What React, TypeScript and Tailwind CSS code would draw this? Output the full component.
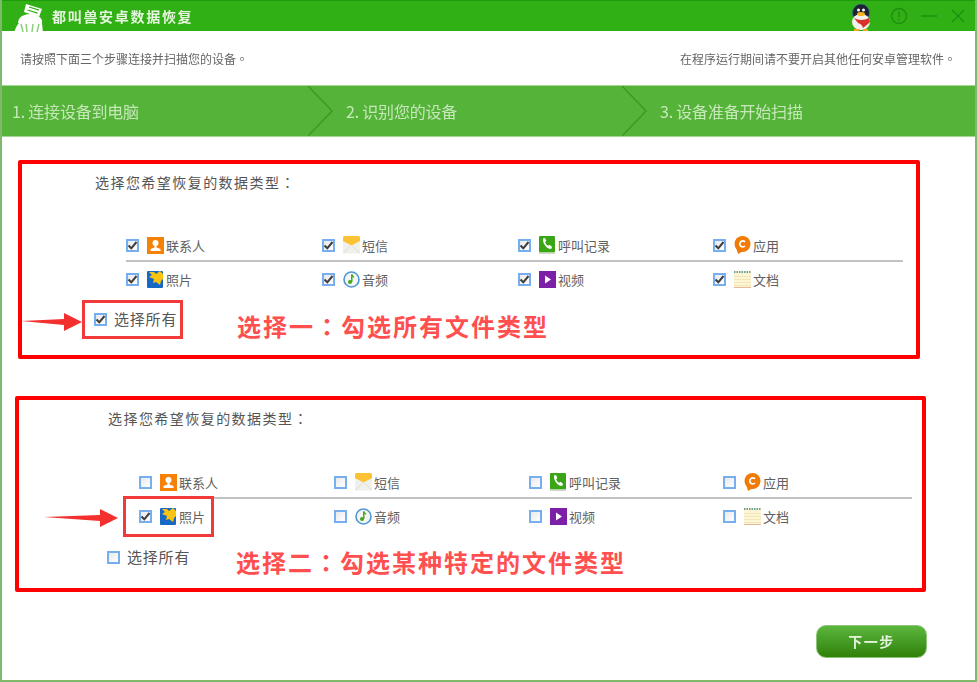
const cjk = { fontFamily: '"Noto Sans CJK SC", "Liberation Sans", sans-serif' };

function Check({ on }: { on?: boolean }) {
  return (
    <span className="flex h-[13px] w-[13px] shrink-0 items-center justify-center border-2 border-[#77aef0] bg-gradient-to-br from-[#e9e9e9] to-white">
      {on && (
        <svg width="11" height="11" viewBox="0 0 11 11" className="shrink-0">
          <path d="M1.5 5.5 L4.3 8.3 L9.5 2" fill="none" stroke="#3d3d3d" strokeWidth="2" />
        </svg>
      )}
    </span>
  );
}

function ContactIcon() {
  return (
    <svg width="17" height="17" viewBox="0 0 17 17">
      <rect width="17" height="17" fill="#f58207" />
      <circle cx="8.5" cy="6" r="3" fill="#fff" />
      <path d="M7.5 8.5h2v2l4 1.6V14H3.5v-1.9l4-1.6z" fill="#fff" />
    </svg>
  );
}

function SmsIcon() {
  return (
    <svg width="17" height="18" viewBox="0 0 17 18">
      <rect y="1" width="17" height="16.5" rx="1" fill="#f0f0ec" />
      <path d="M0 1.5Q0 0 1.5 0h14Q17 0 17 1.5V5l-8.5 4.5L0 5z" fill="#fbc333" />
      <path d="M0.5 17l7-7M16.5 17l-7-7" stroke="#dcdcd6" strokeWidth="1" />
    </svg>
  );
}

function CallIcon() {
  return (
    <svg width="16" height="18" viewBox="0 0 16 18">
      <rect width="16" height="16.5" rx="1" fill="#3aa616" />
      <rect y="16.5" width="16" height="1.5" fill="#cfd8c8" />
      <path d="M4 2.5l2-.5 1.4 3-1.3 1.2c.5 1.5 1.6 2.8 3 3.5l1.3-1 2.6 2-.8 2.3C8 13 3.5 8 4 2.5z" fill="#fff" />
    </svg>
  );
}

function AppIcon() {
  return (
    <svg width="18" height="18" viewBox="0 0 18 18">
      <circle cx="9.5" cy="8" r="8" fill="#f27a07" />
      <path d="M3 11l2 7 5-3z" fill="#f27a07" />
      <path d="M12 5.8A3 3 0 1 0 12 10" fill="none" stroke="#fff" strokeWidth="1.7" />
    </svg>
  );
}

function PhotoIcon() {
  return (
    <svg width="16" height="17" viewBox="0 0 16 17">
      <rect width="16" height="17" rx="1" fill="#1768c4" />
      <path d="M2 1h5l2 2 4-3 3 3v5l-2 2-1 4-4-3-3 1 1-4-5-2 3-2z" fill="#fbc312" />
    </svg>
  );
}

function AudioIcon() {
  return (
    <svg width="17" height="17" viewBox="0 0 17 17">
      <circle cx="8.5" cy="8.5" r="7.5" fill="#f3f6f2" stroke="#4e97d6" strokeWidth="1.6" />
      <path d="M8.8 3.5v7.2" stroke="#4aa51c" strokeWidth="1.5" />
      <circle cx="7" cy="11" r="2" fill="#4aa51c" />
      <path d="M8.8 3.5q.6 2 2.4 2.8" fill="none" stroke="#4aa51c" strokeWidth="1.2" />
    </svg>
  );
}

function VideoIcon() {
  return (
    <svg width="17" height="17" viewBox="0 0 17 17">
      <rect width="17" height="17" fill="#7d20a8" />
      <path d="M6 4.5l6 4-6 4z" fill="#fff" />
    </svg>
  );
}

function DocIcon() {
  return (
    <svg width="17" height="17" viewBox="0 0 17 17">
      <rect width="17" height="17" fill="#fdf5d6" />
      <path d="M0 5.5h17M0 8.5h17M0 11.5h17M0 14.5h17" stroke="#f2e6b8" strokeWidth="1" />
      <path d="M0 1h17" stroke="#6f9f96" strokeWidth="2" strokeDasharray="1.5 1" />
      <path d="M0 16.5h17" stroke="#e8b79a" strokeWidth="1" />
    </svg>
  );
}

function TypeItem({ on, icon, label }: { on?: boolean; icon: React.ReactNode; label: string }) {
  return (
    <div className="flex h-full items-center">
      <Check on={on} />
      <span className="ml-[7px] flex w-[18px] shrink-0 justify-center">{icon}</span>
      <span className="ml-[2px] text-[13px] leading-none text-[#606060]">{label}</span>
    </div>
  );
}

function Arrow({ w }: { w: number }) {
  return (
    <svg width={w} height="18" viewBox={`0 0 ${w} 18`}>
      <path d={`M0 8L${w - 18} 6V0L${w} 9L${w - 18} 18V12z`} fill="#f4302f" />
    </svg>
  );
}

function Chevron() {
  return (
    <svg width="26" height="50" viewBox="0 0 26 50" className="absolute top-0 -right-[20px] z-10">
      <path d="M0 0L24 25L0 50" fill="none" stroke="#3c9a24" strokeWidth="1.5" />
    </svg>
  );
}

export default function App() {
  return (
    <div className="flex h-[682px] w-[977px] flex-col overflow-hidden border-x-2 border-b-2 border-[#7fb96c] bg-white" style={cjk}>
      {/* Title bar */}
      <div className="relative z-20 flex h-[31px] shrink-0 items-center border-t border-[#1f9a0c] bg-[#31b015] pr-[10px] blur-[0.5px]">
        <svg width="30" height="29" viewBox="0 0 30 29" className="mt-[4px] ml-[12px] shrink-0">
          <path d="M12 0l16 5-3 8-15-5z" fill="#fff" />
          <path d="M15 3l10 3.2M13.5 6l10 3.2" stroke="#31b015" strokeWidth="1.3" />
          <path d="M8 12q8-4 16 0 5 3 4 7H4q0-4 4-7z" fill="#fff" />
          <path d="M0 29q2-7 5-10h23l1 10z" fill="#fff" />
          <path d="M12 20l1 8M19 20l-1 8M7 20l2 8M25 20l-2 8" stroke="#8ccf78" strokeWidth="1.5" />
        </svg>
        <span className="ml-[8px] text-[14px] font-bold tracking-[1.7px] text-[#e6f5df]">都叫兽安卓数据恢复</span>
        <svg width="24" height="27" viewBox="0 0 24 27" className="mt-[3px] ml-auto shrink-0">
          <ellipse cx="12" cy="9" rx="8.5" ry="9" fill="#1c2230" stroke="#2f6f8f" strokeWidth="0.8" />
          <ellipse cx="12" cy="18" rx="9" ry="8" fill="#f4f1ec" />
          <path d="M5 14q7 4 15 0l1 4q-3 3-7 6-1-4-5-5z" fill="#d8322a" />
          <ellipse cx="12" cy="10" rx="4" ry="2" fill="#f6b21b" />
          <circle cx="9.5" cy="6" r="1.5" fill="#fff" />
          <circle cx="14.5" cy="6" r="1.5" fill="#fff" />
          <path d="M5 26h5M14 26h5" stroke="#f6a51b" strokeWidth="2" />
        </svg>
        <svg width="18" height="18" viewBox="0 0 18 18" className="ml-[17px] shrink-0">
          <circle cx="9" cy="9" r="7.5" fill="none" stroke="#1f8f10" strokeWidth="1.5" />
          <path d="M9 4.5v6M9 12v1.5" stroke="#1f8f10" strokeWidth="1.5" />
        </svg>
        <svg width="16" height="2" viewBox="0 0 16 2" className="ml-[13px] shrink-0">
          <path d="M0 1h16" stroke="#1f8f10" strokeWidth="1.5" />
        </svg>
        <svg width="14" height="14" viewBox="0 0 14 14" className="ml-[14px] shrink-0">
          <path d="M1 1l12 12M13 1L1 13" stroke="#1f8f10" strokeWidth="1.4" />
        </svg>
      </div>

      {/* Hint row */}
      <div className="flex h-[54px] shrink-0 items-center justify-between pt-[1px] pr-[19px] pl-[18px] font-['Noto_Sans_CJK_TC'] text-[12px] text-[#666] blur-[0.5px]">
        <span>请按照下面三个步骤连接并扫描您的设备。</span>
        <span>在程序运行期间请不要开启其他任何安卓管理软件。</span>
      </div>

      {/* Steps */}
      <div className="flex h-[52px] shrink-0 border-y border-[#a5d695] bg-[#55b33a] text-[16px] tracking-[-0.2px] text-[#c6e8b9]">
        <div className="relative flex w-[312px] items-center pl-[10px]">
          <span className="blur-[0.5px]">1. 连接设备到电脑</span>
          <Chevron />
        </div>
        <div className="relative flex w-[314px] items-center pl-[32px]">
          <span className="blur-[0.5px]">2. 识别您的设备</span>
          <Chevron />
        </div>
        <div className="flex flex-1 items-center pl-[32px]">
          <span className="blur-[0.5px]">3. 设备准备开始扫描</span>
        </div>
      </div>

      {/* Option one */}
      <div className="relative mt-[23px] ml-[16px] h-[199px] w-[902px] shrink-0 rounded-[2px] border-4 border-[#ff0000]">
        <div className="mt-[8px] ml-[73px] h-[20px] font-['Noto_Sans_CJK_TC'] text-[14px] leading-[20px] tracking-[1.45px] text-[#555]">选择您希望恢复的数据类型：</div>
        <div className="mt-[38px] ml-[104px] w-[777px]">
          <div className="grid h-[32px] grid-cols-[196px_196px_195px_1fr] border-b-2 border-[#c2c2c2]">
            <TypeItem on icon={<ContactIcon />} label="联系人" />
            <TypeItem on icon={<SmsIcon />} label="短信" />
            <TypeItem on icon={<CallIcon />} label="呼叫记录" />
            <TypeItem on icon={<AppIcon />} label="应用" />
          </div>
          <div className="grid h-[35px] grid-cols-[196px_196px_195px_1fr]">
            <TypeItem on icon={<PhotoIcon />} label="照片" />
            <TypeItem on icon={<AudioIcon />} label="音频" />
            <TypeItem on icon={<VideoIcon />} label="视频" />
            <TypeItem on icon={<DocIcon />} label="文档" />
          </div>
        </div>
        <div className="mt-[4px] ml-[72px] flex h-[36px] items-center">
          <Check on />
          <span className="ml-[7px] text-[15px] tracking-[0.8px] text-[#555]">选择所有</span>
        </div>
        <div className="absolute top-[136px] left-[60px] h-[39px] w-[101px] border-[3px] border-[#f33a3a]" />
        <div className="absolute top-[149px] -left-[1px] flex">
          <Arrow w={61} />
        </div>
        <div className="absolute top-[144px] left-[215px] font-['Noto_Sans_CJK_TC'] text-[24px] leading-[36px] font-bold tracking-[2px] text-[#ff4f4f]">选择一：勾选所有文件类型</div>
      </div>

      {/* Option two */}
      <div className="relative mt-[37px] ml-[13px] h-[196px] w-[911px] shrink-0 rounded-[2px] border-4 border-[#ff0000]">
        <div className="mt-[8px] ml-[89px] h-[20px] font-['Noto_Sans_CJK_TC'] text-[14px] leading-[20px] tracking-[1.45px] text-[#555]">选择您希望恢复的数据类型：</div>
        <div className="mt-[39px] ml-[120px] w-[773px]">
          <div className="grid h-[32px] grid-cols-[195px_195px_194px_1fr] border-b-2 border-[#c2c2c2]">
            <TypeItem icon={<ContactIcon />} label="联系人" />
            <TypeItem icon={<SmsIcon />} label="短信" />
            <TypeItem icon={<CallIcon />} label="呼叫记录" />
            <TypeItem icon={<AppIcon />} label="应用" />
          </div>
          <div className="grid h-[35px] grid-cols-[195px_195px_194px_1fr]">
            <TypeItem on icon={<PhotoIcon />} label="照片" />
            <TypeItem icon={<AudioIcon />} label="音频" />
            <TypeItem icon={<VideoIcon />} label="视频" />
            <TypeItem icon={<DocIcon />} label="文档" />
          </div>
        </div>
        <div className="mt-[5px] ml-[88px] flex h-[36px] items-center">
          <Check />
          <span className="ml-[7px] text-[15px] tracking-[0.8px] text-[#555]">选择所有</span>
        </div>
        <div className="absolute top-[96px] left-[104px] h-[41px] w-[91px] border-[3px] border-[#f33a3a]" />
        <div className="absolute top-[109px] left-[25px] flex">
          <Arrow w={74} />
        </div>
        <div className="absolute top-[144px] left-[217px] font-['Noto_Sans_CJK_TC'] text-[24px] leading-[36px] font-bold tracking-[2px] text-[#ff4f4f]">选择二：勾选某种特定的文件类型</div>
      </div>

      {/* Next */}
      <div className="mt-[33px] flex justify-end pr-[48px]">
        <button className="h-[33px] w-[111px] rounded-[10px] border border-[#8cc47a] bg-gradient-to-b from-[#5cb63c] to-[#2f8205] text-[14px] font-bold tracking-[1.5px] text-[#e4f3dc] blur-[0.4px]">下一步</button>
      </div>
    </div>
  );
}
